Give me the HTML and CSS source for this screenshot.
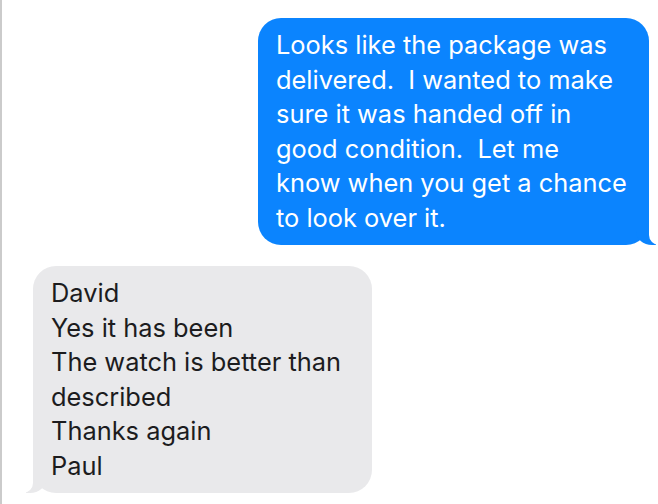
FILE: index.html
```html
<!DOCTYPE html>
<html>
<head>
<meta charset="utf-8">
<link rel="stylesheet" href="styles.css">
</head>
<body>
<div class="thread">
  <div class="bubble sent">Looks like the package was<br>delivered.&nbsp; I wanted to make<br>sure it was handed off in<br>good condition.&nbsp; Let me<br>know when you get a chance<br>to look over it.</div>
  <div class="bubble received">David<br>Yes it has been<br>The watch is better than<br>described<br>Thanks again<br>Paul</div>
</div>
</body>
</html>
```
FILE: styles.css
```css
html, body {
  margin: 0;
  padding: 0;
  background: #ffffff;
}
body {
  width: 658px;
  height: 504px;
  overflow: hidden;
  box-sizing: border-box;
  border-left: 2px solid #cbcbcb;
}
.thread {
  display: flex;
  flex-direction: column;
  padding-top: 18px;
  gap: 21px;
  font-family: "Inter", "Liberation Sans", Arial, sans-serif;
  font-size: 25.4px;
  line-height: 34.5px;
}
.bubble {
  position: relative;
  box-sizing: border-box;
  border-radius: 23px;
  padding: 10px 8px 10px 18px;
}
.sent {
  align-self: flex-end;
  margin-right: 9px;
  width: 391px;
  background: #0b84fe;
  color: #ffffff;
}
.received {
  align-self: flex-start;
  margin-left: 31px;
  width: 339px;
  background: #e9e9eb;
  color: #1c1c1e;
  padding-left: 18px;
}
.sent::before {
  content: "";
  position: absolute;
  right: -7px;
  bottom: 0;
  width: 20px;
  height: 25px;
  background: #0b84fe;
  border-bottom-left-radius: 16px 14px;
}
.sent::after {
  content: "";
  position: absolute;
  right: -26px;
  bottom: 0;
  width: 26px;
  height: 25px;
  background: #ffffff;
  border-bottom-left-radius: 10px;
}
.received::before {
  content: "";
  position: absolute;
  left: -7px;
  bottom: 0;
  width: 20px;
  height: 25px;
  background: #e9e9eb;
  border-bottom-right-radius: 16px 14px;
}
.received::after {
  content: "";
  position: absolute;
  left: -26px;
  bottom: 0;
  width: 26px;
  height: 25px;
  background: #ffffff;
  border-bottom-right-radius: 10px;
}
```
